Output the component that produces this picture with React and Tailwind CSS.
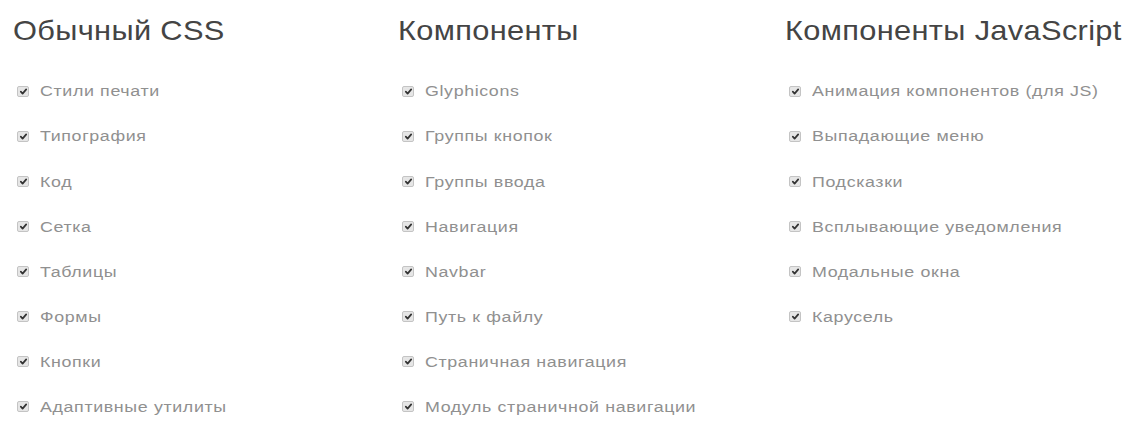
const columns = [
  {
    title: "Обычный CSS",
    items: [
      "Стили печати",
      "Типография",
      "Код",
      "Сетка",
      "Таблицы",
      "Формы",
      "Кнопки",
      "Адаптивные утилиты",
    ],
  },
  {
    title: "Компоненты",
    items: [
      "Glyphicons",
      "Группы кнопок",
      "Группы ввода",
      "Навигация",
      "Navbar",
      "Путь к файлу",
      "Страничная навигация",
      "Модуль страничной навигации",
    ],
  },
  {
    title: "Компоненты JavaScript",
    items: [
      "Анимация компонентов (для JS)",
      "Выпадающие меню",
      "Подсказки",
      "Всплывающие уведомления",
      "Модальные окна",
      "Карусель",
    ],
  },
];

function CheckBox() {
  return (
    <span className="flex h-[11px] w-[12px] shrink-0 items-center justify-center rounded-[2px] border border-[#c4c4c4] bg-[#e6e6e6]">
      <svg viewBox="0 0 10 10" className="h-[9px] w-[9px]">
        <path d="M2 5.2 L4 7.4 L8 2.6" fill="none" stroke="#333" strokeWidth="1.9" strokeLinecap="round" strokeLinejoin="round" />
      </svg>
    </span>
  );
}

export default function App() {
  return (
    <div className="flex h-[421px] w-[1129px] bg-white pl-[13px] font-['Liberation_Sans',Arial,sans-serif]">
      {columns.map((col, i) => (
        <div key={i} className={i === 0 ? "w-[385px]" : i === 1 ? "w-[387px]" : "flex-1"}>
          <h3 className="mt-[14px] origin-left scale-x-[1.1] text-[28px] leading-[34px] font-normal tracking-[0.3px] whitespace-nowrap text-[#444]">
            {col.title}
          </h3>
          <ul className="mt-[33px] flex flex-col gap-[25.1px] pl-[4px]">
            {col.items.map((it) => (
              <li key={it} className="flex h-[20px] items-center gap-[11px] text-[15.5px] tracking-[0.55px] text-[#909090]">
                <CheckBox />
                <span className="origin-left scale-x-[1.15] whitespace-nowrap">{it}</span>
              </li>
            ))}
          </ul>
        </div>
      ))}
    </div>
  );
}
